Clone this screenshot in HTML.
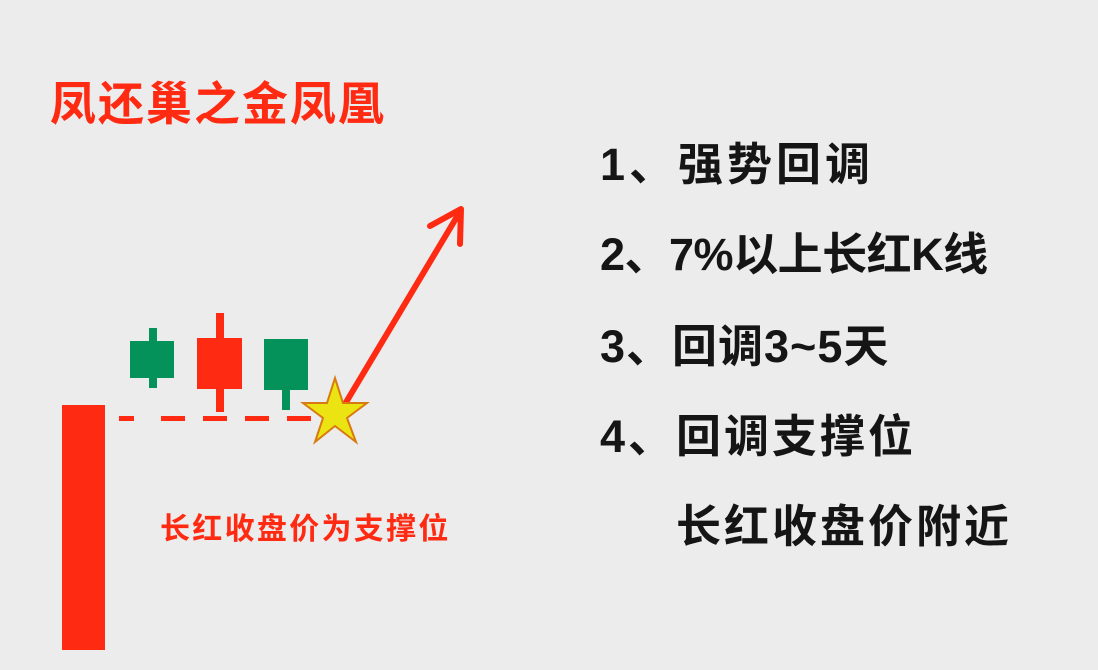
<!DOCTYPE html>
<html><head><meta charset="utf-8"><style>
html,body{margin:0;padding:0;}
body{width:1098px;height:670px;background:#ececec;position:relative;overflow:hidden;font-family:"Liberation Sans","Noto Sans CJK SC",sans-serif;}
.t{position:absolute;white-space:nowrap;line-height:1;}
.title{left:50px;top:81px;font-size:46px;color:#ff2a12;font-weight:bold;letter-spacing:2px;}
.li{font-size:45px;color:#151515;font-weight:bold;}
.lbl{left:160px;top:515px;font-size:30px;color:#ff2a12;font-weight:bold;letter-spacing:2.3px;}
</style></head><body>
<div class="t title">凤还巢之金凤凰</div>
<div class="t li" style="left:600px;top:142px;letter-spacing:4px">1、强势回调</div>
<div class="t li" style="left:600px;top:232px;letter-spacing:-0.5px">2、7%以上长红K线</div>
<div class="t li" style="left:600px;top:324px;letter-spacing:1px">3、回调3~5天</div>
<div class="t li" style="left:600px;top:414px;letter-spacing:3px">4、回调支撑位</div>
<div class="t li" style="left:676px;top:504px;letter-spacing:3px">长红收盘价附近</div>
<div class="t lbl">长红收盘价为支撑位</div>
<svg width="1098" height="670" style="position:absolute;left:0;top:0">
<rect x="62" y="405" width="43" height="245" fill="#ff2a12"/>
<rect x="149" y="328" width="8" height="60" fill="#05925a"/>
<rect x="130" y="341" width="44" height="37" fill="#05925a"/>
<rect x="216" y="313" width="8" height="99" fill="#ff2a12"/>
<rect x="197" y="338" width="45" height="51" fill="#ff2a12"/>
<rect x="282" y="385" width="8" height="25" fill="#05925a"/>
<rect x="264" y="339" width="44" height="51" fill="#05925a"/>
<g fill="#ff2a12">
<rect x="119" y="416" width="15" height="5"/>
<rect x="161" y="416" width="24" height="5"/>
<rect x="203" y="416" width="24" height="5"/>
<rect x="245" y="416" width="24" height="5"/>
<rect x="287" y="416" width="24" height="5"/>
</g>
<line x1="345" y1="404" x2="458" y2="215" stroke="#ff2a12" stroke-width="6" stroke-linecap="round"/>
<polyline points="430,226 461,209 460,244" fill="none" stroke="#ff2a12" stroke-width="6" stroke-linecap="round" stroke-linejoin="round"/>
<polygon points="335,378 343,403 367,403 347,418 356,442 335,426 315,442 323,418 303,403 327,403" fill="#ece412" stroke="#d87a10" stroke-width="2" stroke-linejoin="miter"/>
</svg>
</body></html>
